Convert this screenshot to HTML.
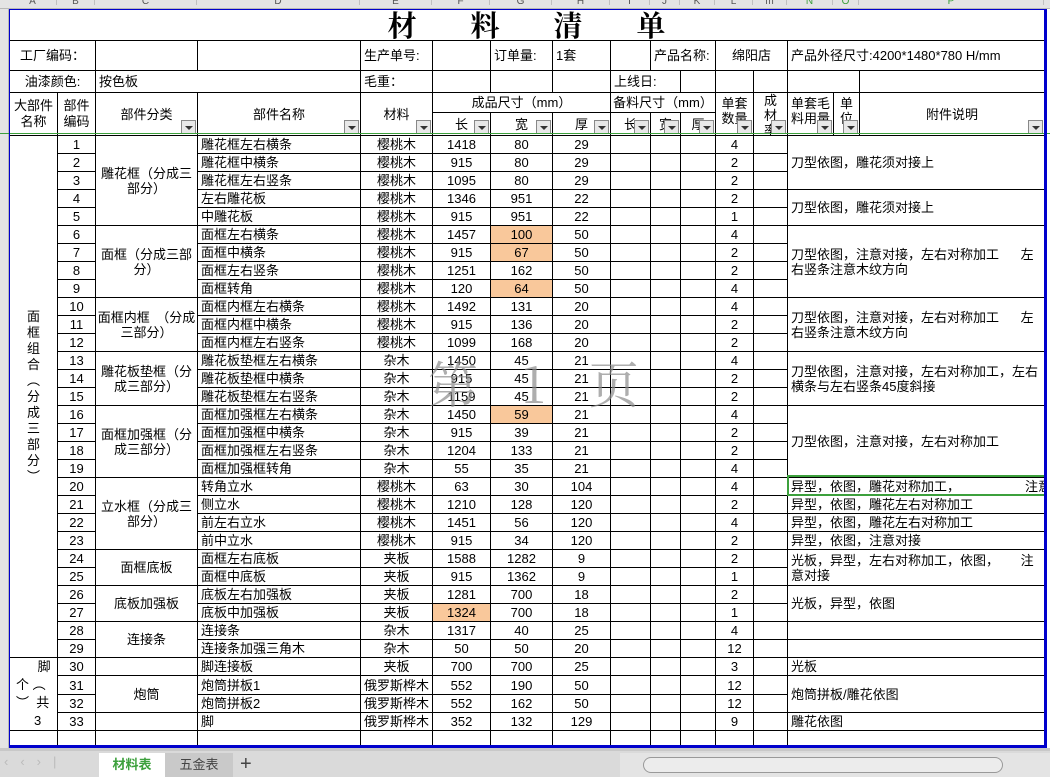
<!DOCTYPE html>
<html><head><meta charset="utf-8">
<style>
*{box-sizing:border-box;margin:0;padding:0}
body{width:1050px;height:777px;overflow:hidden;background:#fff;position:relative;font-family:"Liberation Sans","Noto Sans CJK SC",sans-serif;font-size:13px;color:#000}
#colhdr{position:absolute;left:0;top:0;width:1050px;height:9px;background:#e4e4e4;border-bottom:1px solid #b8b8b8;overflow:hidden}
#colhdr span{position:absolute;top:-4px;font-size:10px;color:#555;text-align:center;border-right:1px solid #c0c0c0;height:9px}
#rowhdr{position:absolute;left:0;top:9px;width:9px;height:739px;background:#e4e4e4;border-right:1px solid #b8b8b8}
table{position:absolute;left:9px;top:9px;border-collapse:collapse;table-layout:fixed;width:1035px}
td{border:1px solid #000;padding:0;text-align:center;vertical-align:middle;white-space:nowrap;overflow:hidden;line-height:15px}
td.l{text-align:left;padding-left:3px}
td.w{white-space:normal}
tr.d td{height:18px}
.hl{background:#f9c89b}
.dd{position:absolute;right:1px;bottom:1px;width:15px;height:14px;background:#e8e8e8;border:1px solid #888}
.dd:after{content:"";position:absolute;left:3px;top:5px;border-left:4px solid transparent;border-right:4px solid transparent;border-top:4px solid #333}
.rel{position:relative}
.clip{height:42px;overflow:hidden;line-height:15px;padding-top:3px}
#outer{position:absolute;left:9px;top:9px;width:1038px;height:739px;border-left:1px solid #00c;border-top:1px solid #00c;border-right:3px solid #00c;border-bottom:3px solid #00c;pointer-events:none}
#title{position:absolute;left:9px;top:9px;width:1035px;height:31px;text-align:center;font-family:"Noto Serif CJK SC",serif;font-weight:bold;font-size:29px;line-height:31px;letter-spacing:54px;padding-left:54px}
#wm{position:absolute;left:428px;top:346px;font-family:"Noto Serif CJK SC",serif;font-size:50px;color:rgba(140,140,140,.7);letter-spacing:6px;white-space:pre}
#sel{position:absolute;left:787px;top:475px;width:259px;height:21px;border:2px solid #3ca03c}
#frz{position:absolute;left:0;top:133px;width:1050px;height:1px;background:#3ca03c}
#tabs{position:absolute;left:0;top:748px;width:1050px;height:29px;background:#dadada;border-top:3px solid #c8c8c8}
</style></head><body>
<div id="colhdr">
<span style="left:9px;width:48px">A</span><span style="left:57px;width:38px">B</span><span style="left:95px;width:102px">C</span><span style="left:197px;width:163px">D</span><span style="left:360px;width:72px">E</span><span style="left:432px;width:58px">F</span><span style="left:490px;width:62px">G</span><span style="left:552px;width:58px">H</span><span style="left:610px;width:40px">I</span><span style="left:650px;width:30px">J</span><span style="left:680px;width:35px">K</span><span style="left:715px;width:38px">L</span><span style="left:753px;width:34px">m</span><span style="left:787px;width:46px;color:#3ca03c">N</span><span style="left:833px;width:26px;color:#3ca03c">O</span><span style="left:859px;width:185px;color:#3ca03c">P</span>
</div>
<div id="rowhdr"></div>
<table>
<colgroup><col style="width:48px"><col style="width:38px"><col style="width:102px"><col style="width:163px"><col style="width:72px"><col style="width:58px"><col style="width:62px"><col style="width:58px"><col style="width:40px"><col style="width:30px"><col style="width:35px"><col style="width:38px"><col style="width:34px"><col style="width:46px"><col style="width:26px"><col style="width:185px"></colgroup>
<tr><td colspan="16" style="height:31px"></td></tr>
<tr style="height:30px"><td colspan="2">工厂编码：</td><td></td><td></td><td class="l">生产单号:</td><td></td><td class="l">订单量:</td><td class="l">1套</td><td></td><td colspan="2" class="l">产品名称:</td><td colspan="2">绵阳店</td><td colspan="3" class="l">产品外径尺寸:4200*1480*780 H/mm</td></tr>
<tr style="height:22px"><td colspan="2">油漆颜色:</td><td colspan="2" class="l">按色板</td><td class="l">毛重：</td><td></td><td></td><td></td><td colspan="2" class="l">上线日:</td><td></td><td></td><td></td><td colspan="2"></td><td></td></tr>
<tr style="height:20px"><td rowspan="2" class="w" style="line-height:16px">大部件<br>名称</td><td rowspan="2" class="w" style="line-height:16px">部件<br>编码</td><td rowspan="2" class="rel">部件分类<div class="dd"></div></td><td rowspan="2" class="rel">部件名称<div class="dd"></div></td><td rowspan="2" class="rel">材料<div class="dd"></div></td><td colspan="3">成品尺寸（mm）</td><td colspan="3">备料尺寸（mm）</td><td rowspan="2" class="rel" style="vertical-align:top"><div class="clip">单套<br>数量</div><div class="dd"></div></td><td rowspan="2" class="rel" style="vertical-align:top"><div class="clip" style="padding-top:0">成<br>材<br>率</div><div class="dd"></div></td><td rowspan="2" class="rel" style="vertical-align:top"><div class="clip">单套毛<br>料用量</div><div class="dd"></div></td><td rowspan="2" class="rel" style="vertical-align:top"><div class="clip">单<br>位</div><div class="dd"></div></td><td rowspan="2" class="rel">附件说明<div class="dd"></div></td></tr>
<tr style="height:22px"><td class="rel">长<div class="dd"></div></td><td class="rel">宽<div class="dd"></div></td><td class="rel">厚<div class="dd"></div></td><td class="rel">长<div class="dd"></div></td><td class="rel">宽<div class="dd"></div></td><td class="rel">厚<div class="dd"></div></td></tr>

<tr class="d"><td rowspan="29" style="line-height:16px">面<br>框<br>组<br>合<br>︵<br>分<br>成<br>三<br>部<br>分<br>︶</td><td>1</td><td rowspan="5" class="w">雕花框（分成三部分）</td><td class="l">雕花框左右横条</td><td>樱桃木</td><td>1418</td><td>80</td><td>29</td><td></td><td></td><td></td><td>4</td><td></td><td colspan="3" rowspan="3" class="l">刀型依图，雕花须对接上</td></tr>
<tr class="d"><td>2</td><td class="l">雕花框中横条</td><td>樱桃木</td><td>915</td><td>80</td><td>29</td><td></td><td></td><td></td><td>2</td><td></td></tr>
<tr class="d"><td>3</td><td class="l">雕花框左右竖条</td><td>樱桃木</td><td>1095</td><td>80</td><td>29</td><td></td><td></td><td></td><td>2</td><td></td></tr>
<tr class="d"><td>4</td><td class="l">左右雕花板</td><td>樱桃木</td><td>1346</td><td>951</td><td>22</td><td></td><td></td><td></td><td>2</td><td></td><td colspan="3" rowspan="2" class="l">刀型依图，雕花须对接上</td></tr>
<tr class="d"><td>5</td><td class="l">中雕花板</td><td>樱桃木</td><td>915</td><td>951</td><td>22</td><td></td><td></td><td></td><td>1</td><td></td></tr>
<tr class="d"><td>6</td><td rowspan="4" class="w">面框（分成三部分）</td><td class="l">面框左右横条</td><td>樱桃木</td><td>1457</td><td class="hl">100</td><td>50</td><td></td><td></td><td></td><td>4</td><td></td><td colspan="3" rowspan="4" class="l">刀型依图，注意对接，左右对称加工&nbsp;&nbsp;&nbsp;&nbsp;&nbsp;&nbsp;左<br>右竖条注意木纹方向</td></tr>
<tr class="d"><td>7</td><td class="l">面框中横条</td><td>樱桃木</td><td>915</td><td class="hl">67</td><td>50</td><td></td><td></td><td></td><td>2</td><td></td></tr>
<tr class="d"><td>8</td><td class="l">面框左右竖条</td><td>樱桃木</td><td>1251</td><td>162</td><td>50</td><td></td><td></td><td></td><td>2</td><td></td></tr>
<tr class="d"><td>9</td><td class="l">面框转角</td><td>樱桃木</td><td>120</td><td class="hl">64</td><td>50</td><td></td><td></td><td></td><td>4</td><td></td></tr>
<tr class="d"><td>10</td><td rowspan="3" class="w">面框内框　（分成三部分）</td><td class="l">面框内框左右横条</td><td>樱桃木</td><td>1492</td><td>131</td><td>20</td><td></td><td></td><td></td><td>4</td><td></td><td colspan="3" rowspan="3" class="l">刀型依图，注意对接，左右对称加工&nbsp;&nbsp;&nbsp;&nbsp;&nbsp;&nbsp;左<br>右竖条注意木纹方向</td></tr>
<tr class="d"><td>11</td><td class="l">面框内框中横条</td><td>樱桃木</td><td>915</td><td>136</td><td>20</td><td></td><td></td><td></td><td>2</td><td></td></tr>
<tr class="d"><td>12</td><td class="l">面框内框左右竖条</td><td>樱桃木</td><td>1099</td><td>168</td><td>20</td><td></td><td></td><td></td><td>2</td><td></td></tr>
<tr class="d"><td>13</td><td rowspan="3" class="w">雕花板垫框（分成三部分）</td><td class="l">雕花板垫框左右横条</td><td>杂木</td><td>1450</td><td>45</td><td>21</td><td></td><td></td><td></td><td>4</td><td></td><td colspan="3" rowspan="3" class="l">刀型依图，注意对接，左右对称加工，左右<br>横条与左右竖条45度斜接</td></tr>
<tr class="d"><td>14</td><td class="l">雕花板垫框中横条</td><td>杂木</td><td>915</td><td>45</td><td>21</td><td></td><td></td><td></td><td>2</td><td></td></tr>
<tr class="d"><td>15</td><td class="l">雕花板垫框左右竖条</td><td>杂木</td><td>1159</td><td>45</td><td>21</td><td></td><td></td><td></td><td>2</td><td></td></tr>
<tr class="d"><td>16</td><td rowspan="4" class="w">面框加强框（分成三部分）</td><td class="l">面框加强框左右横条</td><td>杂木</td><td>1450</td><td class="hl">59</td><td>21</td><td></td><td></td><td></td><td>4</td><td></td><td colspan="3" rowspan="4" class="l">刀型依图，注意对接，左右对称加工</td></tr>
<tr class="d"><td>17</td><td class="l">面框加强框中横条</td><td>杂木</td><td>915</td><td>39</td><td>21</td><td></td><td></td><td></td><td>2</td><td></td></tr>
<tr class="d"><td>18</td><td class="l">面框加强框左右竖条</td><td>杂木</td><td>1204</td><td>133</td><td>21</td><td></td><td></td><td></td><td>2</td><td></td></tr>
<tr class="d"><td>19</td><td class="l">面框加强框转角</td><td>杂木</td><td>55</td><td>35</td><td>21</td><td></td><td></td><td></td><td>4</td><td></td></tr>
<tr class="d"><td>20</td><td rowspan="4" class="w">立水框（分成三部分）</td><td class="l">转角立水</td><td>樱桃木</td><td>63</td><td>30</td><td>104</td><td></td><td></td><td></td><td>4</td><td></td><td colspan="3" class="l">异型，依图，雕花对称加工，&nbsp;&nbsp;&nbsp;&nbsp;&nbsp;&nbsp;&nbsp;&nbsp;&nbsp;&nbsp;&nbsp;&nbsp;&nbsp;&nbsp;&nbsp;&nbsp;&nbsp;&nbsp;注意</td></tr>
<tr class="d"><td>21</td><td class="l">侧立水</td><td>樱桃木</td><td>1210</td><td>128</td><td>120</td><td></td><td></td><td></td><td>2</td><td></td><td colspan="3" class="l">异型，依图，雕花左右对称加工</td></tr>
<tr class="d"><td>22</td><td class="l">前左右立水</td><td>樱桃木</td><td>1451</td><td>56</td><td>120</td><td></td><td></td><td></td><td>4</td><td></td><td colspan="3" class="l">异型，依图，雕花左右对称加工</td></tr>
<tr class="d"><td>23</td><td class="l">前中立水</td><td>樱桃木</td><td>915</td><td>34</td><td>120</td><td></td><td></td><td></td><td>2</td><td></td><td colspan="3" class="l">异型，依图，注意对接</td></tr>
<tr class="d"><td>24</td><td rowspan="2">面框底板</td><td class="l">面框左右底板</td><td>夹板</td><td>1588</td><td>1282</td><td>9</td><td></td><td></td><td></td><td>2</td><td></td><td colspan="3" rowspan="2" class="l">光板，异型，左右对称加工，依图，&nbsp;&nbsp;&nbsp;&nbsp;&nbsp;&nbsp;注<br>意对接</td></tr>
<tr class="d"><td>25</td><td class="l">面框中底板</td><td>夹板</td><td>915</td><td>1362</td><td>9</td><td></td><td></td><td></td><td>1</td><td></td></tr>
<tr class="d"><td>26</td><td rowspan="2">底板加强板</td><td class="l">底板左右加强板</td><td>夹板</td><td>1281</td><td>700</td><td>18</td><td></td><td></td><td></td><td>2</td><td></td><td colspan="3" rowspan="2" class="l">光板，异型，依图</td></tr>
<tr class="d"><td>27</td><td class="l">底板中加强板</td><td>夹板</td><td class="hl">1324</td><td>700</td><td>18</td><td></td><td></td><td></td><td>1</td><td></td></tr>
<tr class="d"><td>28</td><td rowspan="2">连接条</td><td class="l">连接条</td><td>杂木</td><td>1317</td><td>40</td><td>25</td><td></td><td></td><td></td><td>4</td><td></td><td colspan="3"></td></tr>
<tr class="d"><td>29</td><td class="l">连接条加强三角木</td><td>杂木</td><td>50</td><td>50</td><td>20</td><td></td><td></td><td></td><td>12</td><td></td><td colspan="3"></td></tr>
<tr class="d"><td rowspan="4" style="line-height:18px;text-align:left;padding-left:6px;white-space:pre">      脚
个 ︵
︶  共
     3</td><td>30</td><td></td><td class="l">脚连接板</td><td>夹板</td><td>700</td><td>700</td><td>25</td><td></td><td></td><td></td><td>3</td><td></td><td colspan="3" class="l">光板</td></tr>
<tr class="d"><td>31</td><td rowspan="2">炮筒</td><td class="l">炮筒拼板1</td><td>俄罗斯桦木</td><td>552</td><td>190</td><td>50</td><td></td><td></td><td></td><td>12</td><td></td><td colspan="3" rowspan="2" class="l">炮筒拼板/雕花依图</td></tr>
<tr class="d"><td>32</td><td class="l">炮筒拼板2</td><td>俄罗斯桦木</td><td>552</td><td>162</td><td>50</td><td></td><td></td><td></td><td>12</td><td></td></tr>
<tr class="d"><td>33</td><td></td><td class="l">脚</td><td>俄罗斯桦木</td><td>352</td><td>132</td><td>129</td><td></td><td></td><td></td><td>9</td><td></td><td colspan="3" class="l">雕花依图</td></tr>
<tr><td style="height:17px"></td><td></td><td></td><td></td><td></td><td></td><td></td><td></td><td></td><td></td><td></td><td></td><td></td><td colspan="3"></td></tr>
</table>
<div id="title">材料清单</div>
<div id="wm">第  1  页</div>
<div id="frz"></div>
<div id="sel"></div>
<div id="outer"></div>
<div id="tabs">
<div style="position:absolute;left:4px;top:3px;color:#bbb;font-size:13px;letter-spacing:12px">‹‹›|</div>
<div style="position:absolute;left:99px;top:2px;width:66px;height:24px;background:#fff;color:#3ca03c;font-weight:bold;text-align:center;line-height:24px">材料表</div>
<div style="position:absolute;left:165px;top:2px;width:68px;height:24px;background:#c9c9c9;color:#444;text-align:center;line-height:24px">五金表</div>
<div style="position:absolute;left:240px;top:0px;font-size:20px;color:#444;line-height:26px">+</div>
<div style="position:absolute;left:620px;top:2px;width:430px;height:24px;background:#e4e4e4"></div>
<div style="position:absolute;left:643px;top:6px;width:360px;height:16px;border:1px solid #999;border-radius:8px;background:#ececec"></div>
</div>
</body></html>
